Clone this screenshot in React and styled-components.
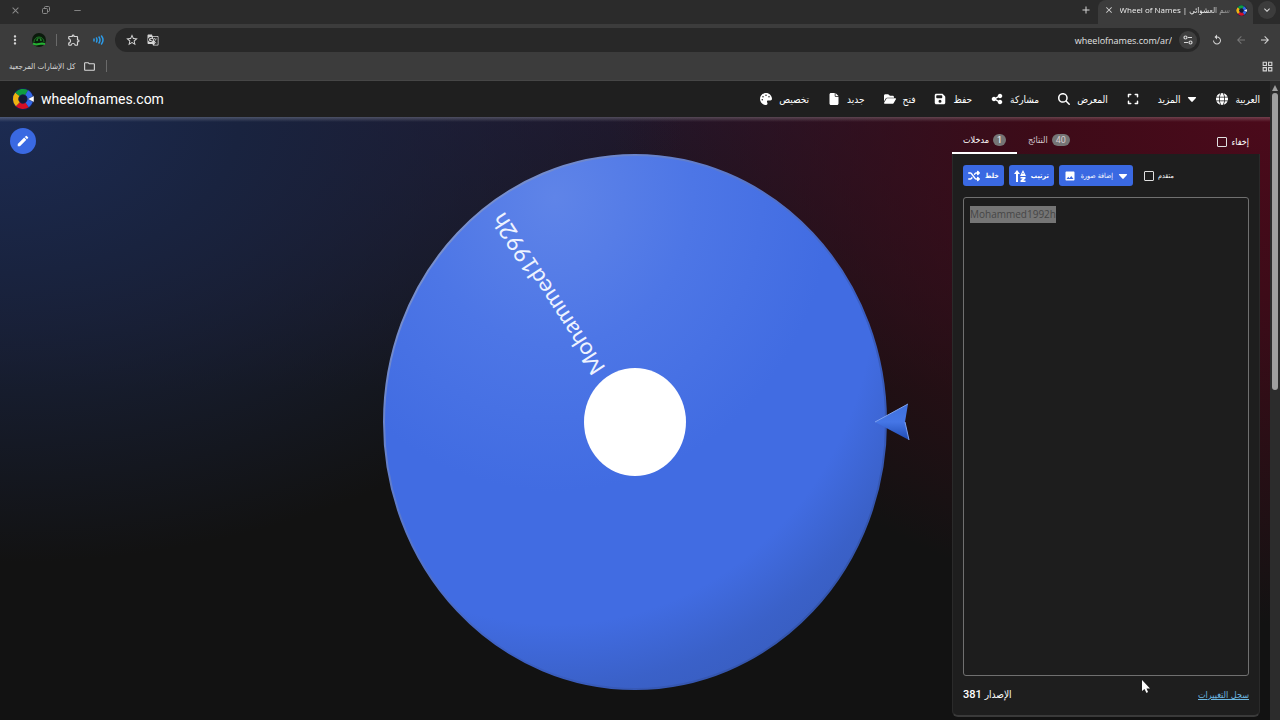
import React, { useEffect, useRef } from "react";
import styled, { createGlobalStyle, css } from "styled-components";
import {
  MdImage, MdEdit, MdStarBorder, MdGTranslate, MdOutlineExtension, MdMoreVert, MdAdd,
  MdClose, MdRemove, MdArrowBack, MdArrowForward, MdReplay, MdOutlineGridView,
  MdOutlineFolder, MdExpandMore,
} from "react-icons/md";
import {
  FaGlobe, FaFile, FaFolderOpen, FaShuffle, FaMagnifyingGlass, FaShareNodes, FaPalette,
  FaFloppyDisk, FaExpand,
} from "react-icons/fa6";

const GlobalStyle = createGlobalStyle`
  *, *::before, *::after { box-sizing: border-box; }
  body { margin: 0; background: #121212; color: #fff; font-family: Roboto, "DejaVu Sans", sans-serif; }
  button, input, textarea { font: inherit; color: inherit; }
`;

const Page = styled.div`
  display: flex;
  flex-direction: column;
  min-height: 100vh;
`;

const bare = css`
  border: 0;
  padding: 0;
  background: none;
  cursor: pointer;
  display: inline-flex;
  align-items: center;
  justify-content: center;
`;

/* Browser chrome */
const TabStrip = styled.div`
  display: flex;
  align-items: stretch;
  justify-content: space-between;
  height: 24px;
  background: #2b2b2b;
`;

const WindowControls = styled.div`
  display: flex;
  align-items: center;
  gap: 17px;
  padding: 0 0 4px 8px;
`;

const ChromeButton = styled.button`
  ${bare}
  width: ${(p) => p.$w || 14}px;
  height: ${(p) => p.$w || 14}px;
  flex: none;
  border-radius: 50%;
  color: ${(p) => p.$color || "#d6d6d6"};
  background: ${(p) => p.$bg || "none"};
  font-size: ${(p) => p.$size || 14}px;
`;

const TabsEnd = styled.div`
  display: flex;
  align-items: center;
  gap: 5px;
  padding: 0 4px 4px 0;
`;

const BrowserTab = styled.div`
  display: flex;
  align-items: center;
  gap: 6px;
  height: 24px;
  margin-bottom: -4px;
  padding: 0 6px 4px 6px;
  border-radius: 8px 8px 0 0;
  background: #3c3c3c;
  font-family: "Open Sans", "DejaVu Sans Condensed", sans-serif;
`;

const TabTitle = styled.span`
  min-width: 110px;
  white-space: nowrap;
  font-size: 8px;
  line-height: 16px;
  color: #f0f0f0;
  mask-image: linear-gradient(to right, #000 80%, rgba(0, 0, 0, 0.3));
`;

const Toolbar = styled.div`
  display: flex;
  align-items: center;
  gap: 10px;
  height: 32px;
  padding: 0 8px;
  background: #3c3c3c;
`;

const ToolGroup = styled.div`
  display: flex;
  align-items: center;
  gap: 10px;
`;

const Divider = styled.span`
  width: 1px;
  height: 12px;
  background: #6a6a6a;
`;

const AddressBar = styled.div`
  flex: 1;
  display: flex;
  align-items: center;
  gap: 7px;
  height: 24px;
  padding: 0 3px 0 10px;
  border-radius: 12px;
  background: #282828;
`;

const AddressInput = styled.input`
  flex: 1;
  min-width: 0;
  padding: 0;
  border: 0;
  outline: 0;
  background: none;
  text-align: right;
  color: #e3e3e3;
  font-family: "Open Sans", sans-serif;
  font-size: 9px;
`;

const BookmarksBar = styled.div`
  display: flex;
  align-items: center;
  justify-content: space-between;
  height: 25px;
  padding: 0 6px 4px 9px;
  background: #3c3c3c;
  border-bottom: 1px solid #464646;
`;

const AllBookmarks = styled.button`
  ${bare}
  gap: 8px;
  color: #d8d8d8;
  font-family: "DejaVu Sans Condensed", "DejaVu Sans", sans-serif;
  font-size: 8px;
`;

/* Site */
const Site = styled.div`
  flex: 1;
  display: flex;
`;

const SiteBody = styled.div`
  flex: 1;
  min-width: 0;
  display: flex;
  flex-direction: column;
`;

const ScrollTrack = styled.div`
  width: 10px;
  padding: 4px 2px 0;
  background: #2c2c2c;
`;

const ScrollArrow = styled.div`
  height: 6px;
  margin-bottom: 2px;
  background: #9f9f9f;
  clip-path: polygon(50% 0, 100% 100%, 0 100%);
`;

const ScrollThumb = styled.div`
  height: 47vh;
  max-height: 297px;
  border-radius: 3px;
  background: #9f9f9f;
`;

const Header = styled.header`
  display: flex;
  align-items: center;
  justify-content: space-between;
  height: 36px;
  padding: 0 10px 0 12px;
  background: #1f1f1f;
`;

const Brand = styled.a`
  display: flex;
  align-items: center;
  gap: 7px;
  color: #fff;
  font-size: 14px;
  text-decoration: none;
`;

const Menu = styled.nav`
  display: flex;
  align-items: center;
  gap: 19px;
`;

const MenuButton = styled.button`
  ${bare}
  gap: 7px;
  height: 20px;
  font-family: "DejaVu Sans Condensed", "DejaVu Sans", sans-serif;
  font-size: 10px;
  white-space: nowrap;
  svg { font-size: 12px; }
`;

const Main = styled.main`
  flex: 1;
  display: grid;
  grid-template-columns: minmax(40px, 1fr) minmax(0, 560px) minmax(318px, 1fr);
  padding-top: 3px;
  background:
    linear-gradient(rgba(255, 255, 255, 0.22), rgba(255, 255, 255, 0)) 0 0 / 100% 5px no-repeat,
    radial-gradient(ellipse 54% 74% at 0% 0%, #1c2b52 0%, #19233f 35%, rgba(18, 18, 18, 0) 100%),
    radial-gradient(ellipse 52% 84% at 100% 0%, #4b0a1b 0%, #3d0b18 35%, rgba(18, 18, 18, 0) 100%),
    linear-gradient(#20172a, #121212 45%);
`;

const Side = styled.div`
  padding: 8px 10px;
`;

const EditButton = styled.button`
  ${bare}
  width: 26px;
  height: 26px;
  border-radius: 50%;
  background: #3a69e2;
  font-size: 14px;
`;

const WheelArea = styled.div`
  display: flex;
  align-items: center;
  padding-top: 3px;
  svg { display: block; width: 100%; height: auto; }
`;

const Aside = styled.aside`
  display: flex;
  flex-direction: column;
  width: 308px;
  margin: 10px 10px 3px auto;
`;

const TabRow = styled.div`
  display: flex;
  align-items: stretch;
  justify-content: space-between;
  height: 24px;
  padding-right: 11px;
`;

const Tabs = styled.div`
  display: flex;
`;

const PanelTab = styled.button`
  ${bare}
  gap: 4px;
  padding: 0 11px 3px;
  border-bottom: 2px solid ${(p) => (p.$active ? "#fff" : "transparent")};
  color: ${(p) => (p.$active ? "#fff" : "#d8ccd0")};
  font-family: "DejaVu Sans Condensed", "DejaVu Sans", sans-serif;
  font-size: 9px;
`;

const Badge = styled.span`
  min-width: 12px;
  padding: 0 4px;
  border-radius: 6px;
  background: #757575;
  font-family: Roboto, sans-serif;
  font-size: 9px;
  line-height: 12px;
`;

const Check = styled.label`
  display: flex;
  align-items: center;
  gap: 4px;
  font-family: "DejaVu Sans Condensed", "DejaVu Sans", sans-serif;
  font-size: ${(p) => p.$size}px;
  input {
    appearance: none;
    width: 10px;
    height: 10px;
    margin: 0;
    border: 1px solid #e0e0e0;
    border-radius: 1px;
  }
`;

const Card = styled.section`
  flex: 1;
  display: flex;
  flex-direction: column;
  padding: 11px 10px 13px 10px;
  border: 1px solid #2a2a2a;
  border-top: 0;
  border-bottom: 2px solid #3a3a3a;
  border-radius: 0 0 6px 6px;
  background: #1e1e1e;
`;

const Actions = styled.div`
  display: flex;
  align-items: center;
  gap: 5px;
  margin-bottom: 11px;
`;

const ActionButton = styled.button`
  ${bare}
  gap: 5px;
  height: 21px;
  padding: 0 5px;
  margin-right: ${(p) => (p.$last ? 6 : 0)}px;
  border-radius: 3px;
  background: #3a69e2;
  font-family: "DejaVu Sans Condensed", "DejaVu Sans", sans-serif;
  font-size: 7px;
  font-weight: ${(p) => (p.$last ? 400 : 700)};
  white-space: nowrap;
  svg { font-size: 12px; }
`;

const Entries = styled.textarea`
  flex: 1;
  width: 100%;
  padding: 8px 6px;
  border: 1px solid #707070;
  border-radius: 3px;
  outline: 0;
  resize: none;
  background: #1d1d1d;
  font-family: "Open Sans", sans-serif;
  font-size: 10px;
  line-height: 17px;
  &::selection { background: #757575; color: #464646; }
`;

const CardFooter = styled.footer`
  display: flex;
  align-items: center;
  justify-content: space-between;
  margin-top: 12px;
  font-family: "DejaVu Sans Condensed", "DejaVu Sans", sans-serif;
  font-size: 10px;
  line-height: 14px;
`;

const Version = styled.span`
  display: flex;
  gap: 3px;
`;

const VersionNumber = styled.span`
  font-family: Roboto, sans-serif;
  font-size: 11px;
  font-weight: 500;
`;

const ChangeLog = styled.a`
  color: #6cb6e0;
  font-size: 9px;
`;

const Cursor = styled.svg`
  position: absolute;
  right: 130px;
  bottom: 27px;
  pointer-events: none;
`;

function Logo({ size }) {
  const arc = (color, from, to) => {
    const p = (a) => [12 + 8 * Math.cos((a * Math.PI) / 180), 12 + 8 * Math.sin((a * Math.PI) / 180)].join(" ");
    return <path d={`M${p(from)} A8 8 0 0 1 ${p(to)}`} fill="none" stroke={color} strokeWidth="6" />;
  };
  return (
    <svg width={size} height={size} viewBox="0 0 24 24" aria-hidden="true">
      <circle cx="12" cy="12" r="12" fill="#17204a" />
      {arc("#d50f25", 55, 135)}
      {arc("#eeb211", 135, 220)}
      {arc("#0f9d40", 220, 300)}
      {arc("#3369e8", 300, 415)}
      <circle cx="12" cy="12" r="4" fill="#121a33" />
      <path d="M17 12 24 8.500V15.500Z" fill="#fff" stroke="#17204a" strokeWidth="0.500" />
    </svg>
  );
}

function Avatar() {
  return (
    <svg width="14" height="14" viewBox="0 0 14 14" aria-hidden="true">
      <circle cx="7" cy="7" r="7" fill="#0b1a0c" />
      <path d="M2 9a5 5 0 1 1 10 0M4.500 8a2.500 3 0 1 1 5 0" fill="none" stroke="#1c7a25" />
      <path d="M1 10.500l3 1 6-1 3 .5" fill="none" stroke="#25b233" strokeWidth="2" />
      <path d="M5 7h1M8 7h1" stroke="#2fd03f" />
    </svg>
  );
}

function SoundWaves() {
  return (
    <svg width="11" height="10" viewBox="0 0 11 10" fill="none" stroke="#2c9be8" strokeWidth="1.5" strokeLinecap="round" aria-hidden="true">
      <path d="M1 4v2M3.500 3q1 2 0 4M6 2q2 3 0 6M8.500 1q3 4 0 8" />
    </svg>
  );
}

function RestoreIcon() {
  return (
    <svg width="8" height="8" viewBox="0 0 8 8" fill="none" stroke="currentColor" aria-hidden="true">
      <rect x="0.500" y="2.500" width="5" height="5" rx="1" />
      <path d="M2.500 2.500V1.500a1 1 0 0 1 1-1h3a1 1 0 0 1 1 1v3a1 1 0 0 1-1 1h-1" />
    </svg>
  );
}

function SiteInfoIcon() {
  return (
    <svg width="10" height="10" viewBox="0 0 10 10" fill="none" stroke="currentColor" strokeWidth="1.200" aria-hidden="true">
      <circle cx="2.500" cy="2.500" r="1.500" />
      <path d="M5 2.500h4M1 7.500h4" />
      <circle cx="7.500" cy="7.500" r="1.500" />
    </svg>
  );
}

function Caret({ size = 10 }) {
  return (
    <svg width={size} height={size} viewBox="0 0 10 10" fill="currentColor" aria-hidden="true">
      <path d="M1.500 3h7q1 0 .4.900L5.700 7.600q-.7.700-1.400 0L1.100 3.900Q.5 3 1.500 3Z" />
    </svg>
  );
}

function SortIcon() {
  return (
    <svg width="12" height="12" viewBox="0 0 12 12" fill="#fff" aria-hidden="true">
      <path d="M3 0 6 4H4V12H2V4H0Z" />
      <path fillRule="evenodd" d="M9 0 12 6H6ZM9 2.500 8.300 4h1.400Z" />
      <path d="M6.500 7h5v1.600L9.300 10.400h2.200V12h-5v-1.600L8.700 8.600H6.500Z" />
    </svg>
  );
}

function Wheel() {
  return (
    <svg viewBox="0 0 560 560" role="img" aria-label="Mohammed1992h">
      <defs>
        <radialGradient id="shine" cx="0.34" cy="0.08" r="0.55">
          <stop offset="0" stopColor="#5f84e8" />
          <stop offset="0.5" stopColor="#4d76e6" />
          <stop offset="1" stopColor="#416ce2" />
        </radialGradient>
        <radialGradient id="shade" cx="0.34" cy="0.24" r="0.84">
          <stop offset="0.76" stopColor="#3558b4" stopOpacity="0" />
          <stop offset="0.9" stopColor="#3558b4" stopOpacity="0.55" />
          <stop offset="1" stopColor="#3558b4" stopOpacity="0.75" />
        </radialGradient>
        <linearGradient id="rim" x1="0" y1="0" x2="1" y2="1">
          <stop offset="0" stopColor="#8b9ed0" />
          <stop offset="0.6" stopColor="#3b5fc4" />
          <stop offset="1" stopColor="#304f9f" />
        </linearGradient>
        <linearGradient id="pointer" x1="0" y1="0" x2="0" y2="1">
          <stop offset="0" stopColor="#3f70dc" />
          <stop offset="0.5" stopColor="#4576e6" />
          <stop offset="1" stopColor="#1f4bb4" />
        </linearGradient>
      </defs>
      <ellipse cx="280" cy="280" rx="251" ry="267" fill="url(#shine)" />
      <ellipse cx="280" cy="280" rx="251" ry="267" fill="url(#shade)" stroke="url(#rim)" strokeWidth="2" />
      <text
        transform="translate(251 226) rotate(-123)"
        fill="#eef3ff"
        fontFamily="Lato, sans-serif"
        fontSize="23"
      >
        Mohammed1992h
      </text>
      <ellipse cx="280" cy="280" rx="51" ry="54" fill="#fff" />
      <path d="M520 280 553 262 550 280 554 298Z" fill="url(#pointer)" />
      <path d="M520 280 553 262" stroke="#7ea2f0" strokeWidth="1" />
      <path d="M550 280 554 298" stroke="#7ea2f0" strokeWidth="1" />
    </svg>
  );
}

export default function App() {
  const entries = useRef(null);
  useEffect(() => {
    entries.current.focus();
    entries.current.select();
  }, []);

  return (
    <Page>
      <GlobalStyle />
      <TabStrip>
        <WindowControls>
          <ChromeButton aria-label="Close window" $color="#8b8b8b" $size={11}><MdClose /></ChromeButton>
          <ChromeButton aria-label="Restore window" $color="#8b8b8b"><RestoreIcon /></ChromeButton>
          <ChromeButton aria-label="Minimise window" $color="#8b8b8b" $size={11}><MdRemove /></ChromeButton>
        </WindowControls>
        <TabsEnd>
          <ChromeButton aria-label="New tab" $size={12}><MdAdd /></ChromeButton>
          <BrowserTab>
            <ChromeButton aria-label="Close tab" $w={10} $size={10}><MdClose /></ChromeButton>
            <TabTitle>Wheel of Names | سم العشوائي</TabTitle>
            <Logo size={11} />
          </BrowserTab>
          <ChromeButton aria-label="Search tabs" $w={18} $bg="#3c3c3c" $size={12}><MdExpandMore /></ChromeButton>
        </TabsEnd>
      </TabStrip>

      <Toolbar>
        <ToolGroup>
          <ChromeButton aria-label="Browser menu"><MdMoreVert /></ChromeButton>
          <ChromeButton aria-label="Profile"><Avatar /></ChromeButton>
          <Divider />
          <ChromeButton aria-label="Extensions"><MdOutlineExtension /></ChromeButton>
          <ChromeButton aria-label="Audio"><SoundWaves /></ChromeButton>
        </ToolGroup>
        <AddressBar>
          <ChromeButton aria-label="Bookmark page"><MdStarBorder /></ChromeButton>
          <ChromeButton aria-label="Translate" $size={12}><MdGTranslate /></ChromeButton>
          <AddressInput aria-label="Address" defaultValue="wheelofnames.com/ar/" />
          <ChromeButton aria-label="Site information" $w={18} $bg="#3f3f3f"><SiteInfoIcon /></ChromeButton>
        </AddressBar>
        <ToolGroup>
          <ChromeButton aria-label="Reload" $size={12}><MdReplay /></ChromeButton>
          <ChromeButton aria-label="Forward" $color="#777" $size={12}><MdArrowBack /></ChromeButton>
          <ChromeButton aria-label="Back" $size={12}><MdArrowForward /></ChromeButton>
        </ToolGroup>
      </Toolbar>

      <BookmarksBar>
        <ToolGroup>
          <AllBookmarks><span>كل الإشارات المرجعية</span><MdOutlineFolder size={13} /></AllBookmarks>
          <Divider />
        </ToolGroup>
        <ChromeButton aria-label="Apps" $size={13}><MdOutlineGridView /></ChromeButton>
      </BookmarksBar>

      <Site>
        <SiteBody>
          <Header>
            <Brand href="#"><Logo size={22} />wheelofnames.com</Brand>
            <Menu>
              <MenuButton><FaPalette /><span>تخصيص</span></MenuButton>
              <MenuButton><FaFile /><span>جديد</span></MenuButton>
              <MenuButton><FaFolderOpen /><span>فتح</span></MenuButton>
              <MenuButton><FaFloppyDisk /><span>حفظ</span></MenuButton>
              <MenuButton><FaShareNodes /><span>مشاركة</span></MenuButton>
              <MenuButton><FaMagnifyingGlass /><span>المعرض</span></MenuButton>
              <MenuButton aria-label="ملء الشاشة"><FaExpand /></MenuButton>
              <MenuButton><span>المزيد</span><Caret /></MenuButton>
              <MenuButton><FaGlobe /><span>العربية</span></MenuButton>
            </Menu>
          </Header>

          <Main>
            <Side>
              <EditButton aria-label="Edit"><MdEdit /></EditButton>
            </Side>
            <WheelArea><Wheel /></WheelArea>
            <Aside>
              <TabRow>
                <Tabs>
                  <PanelTab $active><span>مدخلات</span><Badge>1</Badge></PanelTab>
                  <PanelTab><span>النتائج</span><Badge>40</Badge></PanelTab>
                </Tabs>
                <Check $size={9}><input type="checkbox" /><span>إخفاء</span></Check>
              </TabRow>
              <Card>
                <Actions>
                  <ActionButton><FaShuffle /><span>خلط</span></ActionButton>
                  <ActionButton><SortIcon /><span>ترتيب</span></ActionButton>
                  <ActionButton $last><MdImage /><span>إضافة صورة</span><Caret /></ActionButton>
                  <Check $size={7}><input type="checkbox" /><span>متقدم</span></Check>
                </Actions>
                <Entries ref={entries} aria-label="مدخلات" spellCheck="false" defaultValue="Mohammed1992h" />
                <CardFooter>
                  <Version><VersionNumber>381</VersionNumber><bdi>الإصدار</bdi></Version>
                  <ChangeLog href="#">سجل التغييرات</ChangeLog>
                </CardFooter>
              </Card>
            </Aside>
          </Main>
        </SiteBody>
        <ScrollTrack><ScrollArrow /><ScrollThumb /></ScrollTrack>
      </Site>
      <Cursor width="8" height="13" viewBox="0 0 8 13" aria-hidden="true">
        <path d="M0 0V11L2.500 9 4.500 13 6 12 4.500 8.500H8Z" fill="#fff" />
      </Cursor>
    </Page>
  );
}
